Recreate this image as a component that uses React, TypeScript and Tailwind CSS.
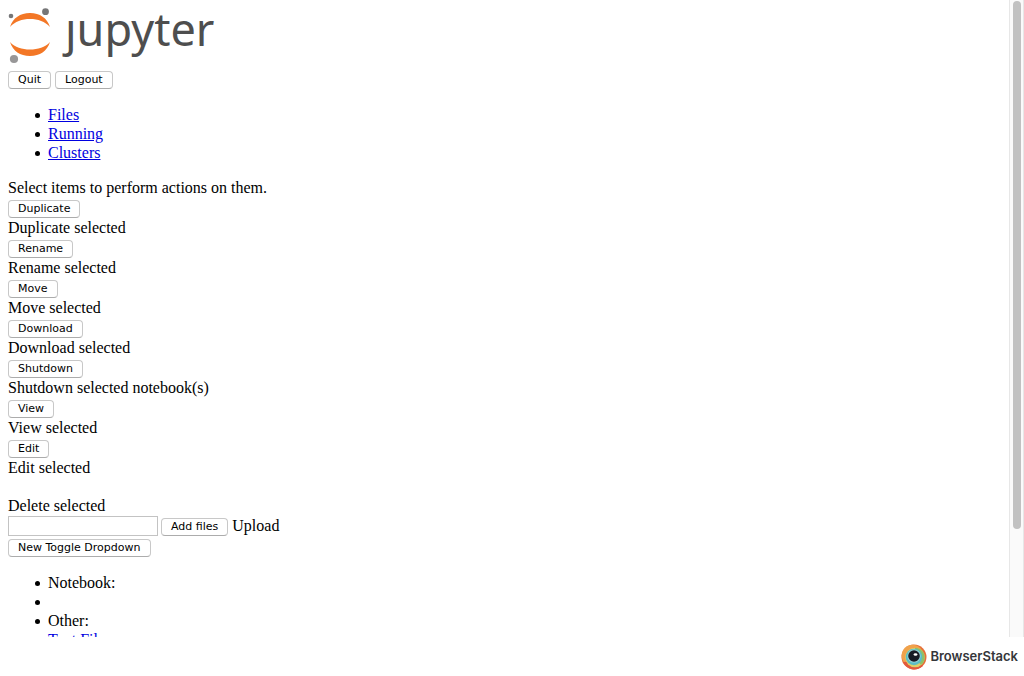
import type { ReactNode } from 'react';

function PushButton({ children }: { children: ReactNode }) {
  return (
    <button
      type="button"
      className="h-[18px] rounded-[4px] border border-[#c8c8c8] border-b-[#acacac] bg-white px-[9px] font-['DejaVu_Sans','Lucida_Grande',sans-serif] text-[11px] leading-[14px] whitespace-nowrap text-black"
    >
      {children}
    </button>
  );
}

function JupyterLogo() {
  return (
    <svg className="block h-14 w-[212px] overflow-visible" viewBox="0 0 212 56" role="img" aria-label="jupyter">
      <path d="M2 19C5 10 12 5 22 5s17 5 20 14C37 13.500 30 11 22 11S7 13.500 2 19Z" fill="#f37726" />
      <path d="M2 34c3 9 10 14 20 14s17-5 20-14c-5 5.500-12 7.500-20 7.500S7 39.500 2 34Z" fill="#f37726" />
      <circle cx="3" cy="8" r="2.300" fill="#767677" />
      <circle cx="37.500" cy="3.700" r="3.400" fill="#767677" />
      <circle cx="6" cy="51" r="4.100" fill="#989798" />
      <text x="57" y="38" fill="#4e4e4e" fontFamily="'Noto Sans', 'Open Sans', sans-serif" fontSize="45">
        ȷupyter
      </text>
    </svg>
  );
}

function BrowserStackMark() {
  return (
    <svg className="block size-[26px]" viewBox="0 0 26 26" aria-hidden="true">
      <circle cx="13" cy="13" r="12.500" fill="#e66f37" />
      <circle cx="11.500" cy="11.500" r="10.800" fill="#f0a24b" />
      <path d="M2 18a12.500 12.500 0 0 0 20 4l-4-5Z" fill="#e2583e" />
      <circle cx="14" cy="13.500" r="9.800" fill="#dfcf65" />
      <path d="M14 3.700a9.800 9.800 0 0 1 6 17.400l-6-7Z" fill="#8fc06a" />
      <circle cx="13" cy="13" r="8.300" fill="#5bbdc4" />
      <circle cx="13" cy="12" r="6.600" fill="#9fd6dc" />
      <circle cx="13" cy="12" r="5.800" fill="#171b25" />
      <ellipse cx="14.500" cy="10.500" rx="1.900" ry="1.300" fill="#fff" />
    </svg>
  );
}

function BulletList({ children }: { children: ReactNode }) {
  return <ul className="my-4 pl-[27px]">{children}</ul>;
}

function BulletItem({ children }: { children?: ReactNode }) {
  return (
    <li className="flex h-[19px] items-center gap-2 before:mt-px before:size-[5px] before:rounded-full before:bg-black">
      {children}
    </li>
  );
}

const actions = [
  { label: 'Duplicate', description: 'Duplicate selected' },
  { label: 'Rename', description: 'Rename selected' },
  { label: 'Move', description: 'Move selected' },
  { label: 'Download', description: 'Download selected' },
  { label: 'Shutdown', description: 'Shutdown selected notebook(s)' },
  { label: 'View', description: 'View selected' },
  { label: 'Edit', description: 'Edit selected' },
];

const linkStyle = 'text-[#0000e0] underline';

export default function App() {
  return (
    <div className="flex h-screen flex-col overflow-hidden bg-white font-['Liberation_Serif','Times_New_Roman',serif] text-base leading-[19px] text-black">
      <div className="flex min-h-0 flex-1">
        <main className="min-w-0 flex-1 overflow-hidden p-2">
          <a href="#home" className="block w-fit">
            <JupyterLogo />
          </a>
          <div className="mt-[7px] flex gap-1">
            <PushButton>Quit</PushButton>
            <PushButton>Logout</PushButton>
          </div>
          <BulletList>
            <BulletItem><a href="#files" className={linkStyle}>Files</a></BulletItem>
            <BulletItem><a href="#running" className={linkStyle}>Running</a></BulletItem>
            <BulletItem><a href="#clusters" className={linkStyle}>Clusters</a></BulletItem>
          </BulletList>
          <p>Select items to perform actions on them.</p>
          {actions.map(({ label, description }) => (
            <div key={label}>
              <div className="flex pt-[3px]">
                <PushButton>{label}</PushButton>
              </div>
              <p>{description}</p>
            </div>
          ))}
          <p className="mt-[19px]">Delete selected</p>
          <div className="mt-px flex items-end">
            <input
              type="text"
              aria-label="Files to upload"
              className="mr-[3px] h-5 w-[150px] border border-[#c3c3c3] bg-white px-1 text-[11px]"
            />
            <PushButton>Add files</PushButton>
            <span className="ml-1 self-start">Upload</span>
          </div>
          <div className="mt-[3px] flex">
            <PushButton>New Toggle Dropdown</PushButton>
          </div>
          <BulletList>
            <BulletItem>Notebook:</BulletItem>
            <BulletItem />
            <BulletItem>Other:</BulletItem>
            <BulletItem><a href="#text-file" className={linkStyle}>Text File</a></BulletItem>
          </BulletList>
        </main>
        <div className="flex w-[15px] shrink-0 justify-center border-x border-[#e7e7e7] bg-[#fafafa] pt-px" aria-hidden="true">
          <div className="h-[83%] w-2 rounded-full bg-[#c1c1c1]" />
        </div>
      </div>
      <footer className="flex h-[39px] shrink-0 items-center justify-end gap-[3px] pr-[6px]">
        <BrowserStackMark />
        <span className="font-['Inter',sans-serif] text-[13px] font-semibold text-[#35363a]">BrowserStack</span>
      </footer>
    </div>
  );
}
